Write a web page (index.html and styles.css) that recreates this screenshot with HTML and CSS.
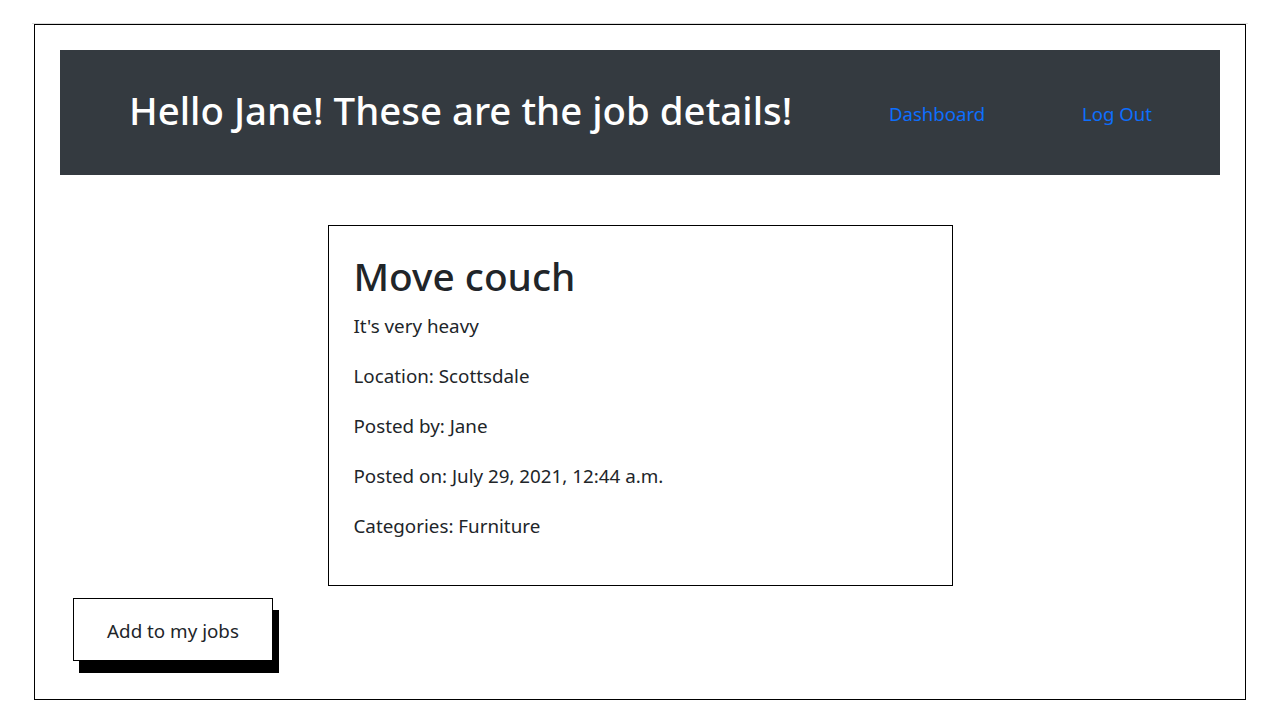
FILE: index.html
```html
<!DOCTYPE html>
<html lang="en">
<head>
<meta charset="utf-8">
<title>Job details</title>
<link rel="stylesheet" href="styles.css">
</head>
<body>
<div class="frame">
  <nav class="navbar">
    <h1 class="greeting">Hello Jane! These are the job details!</h1>
    <a class="nav-link" href="#">Dashboard</a>
    <a class="nav-link" href="#">Log Out</a>
  </nav>
  <main class="content">
    <section class="job-card">
      <h2 class="job-title">Move couch</h2>
      <p class="job-line">It's very heavy</p>
      <p class="job-line">Location: Scottsdale</p>
      <p class="job-line">Posted by: Jane</p>
      <p class="job-line">Posted on: July 29, 2021, 12:44 a.m.</p>
      <p class="job-line">Categories: Furniture</p>
    </section>
  </main>
  <div class="actions">
    <button class="add-btn" type="button">Add to my jobs</button>
  </div>
</div>
</body>
</html>
```

FILE: styles.css
```css
* { box-sizing: border-box; }

html, body {
  margin: 0;
  padding: 0;
  background: #fff;
}

body {
  font-family: "Noto Sans", "Open Sans", sans-serif;
  color: #212529;
  padding: 24px 35px 23px 34px;
}

.frame {
  position: relative;
  border: 1px solid #000;
  height: 676px;
  padding: 25px;
  display: flex;
  flex-direction: column;
}

.frame::before {
  content: "";
  position: absolute;
  left: -3px;
  right: -3px;
  top: -2px;
  height: 1px;
  background: #dcdcdc;
}

.navbar {
  background: #343a40;
  height: 125px;
  display: flex;
  align-items: center;
  justify-content: space-between;
  padding: 0 68px 0 69px;
}

.greeting {
  margin: 0 0 4px 0;
  color: #fff;
  font-size: 38.4px;
  font-weight: 500;
  line-height: 1.2;
}

.nav-link {
  color: #0d6efd;
  text-decoration: none;
  font-size: 18.6px;
  line-height: 30px;
  margin-top: 2px;
}

.content {
  display: flex;
  justify-content: center;
  padding-top: 50px;
}

.job-card {
  width: 625px;
  border: 1px solid #000;
  padding: 26px 25px 5px 25px;
}

.job-title {
  margin: 0 0 10px 0;
  font-size: 38.8px;
  font-weight: 500;
  line-height: 49px;
}

.job-line {
  margin: 0 0 20px 0;
  font-size: 18.8px;
  line-height: 30px;
}

.job-line:last-child {
  margin-bottom: 39px;
}

.actions {
  padding: 12px 0 0 13px;
}

.add-btn {
  font-family: inherit;
  font-size: 18.8px;
  line-height: 29px;
  color: #212529;
  background: #fff;
  border: 1px solid #000;
  padding: 18px 0 14px;
  width: 200px;
  box-shadow: 6px 12px 0 #000;
  cursor: pointer;
}
```
